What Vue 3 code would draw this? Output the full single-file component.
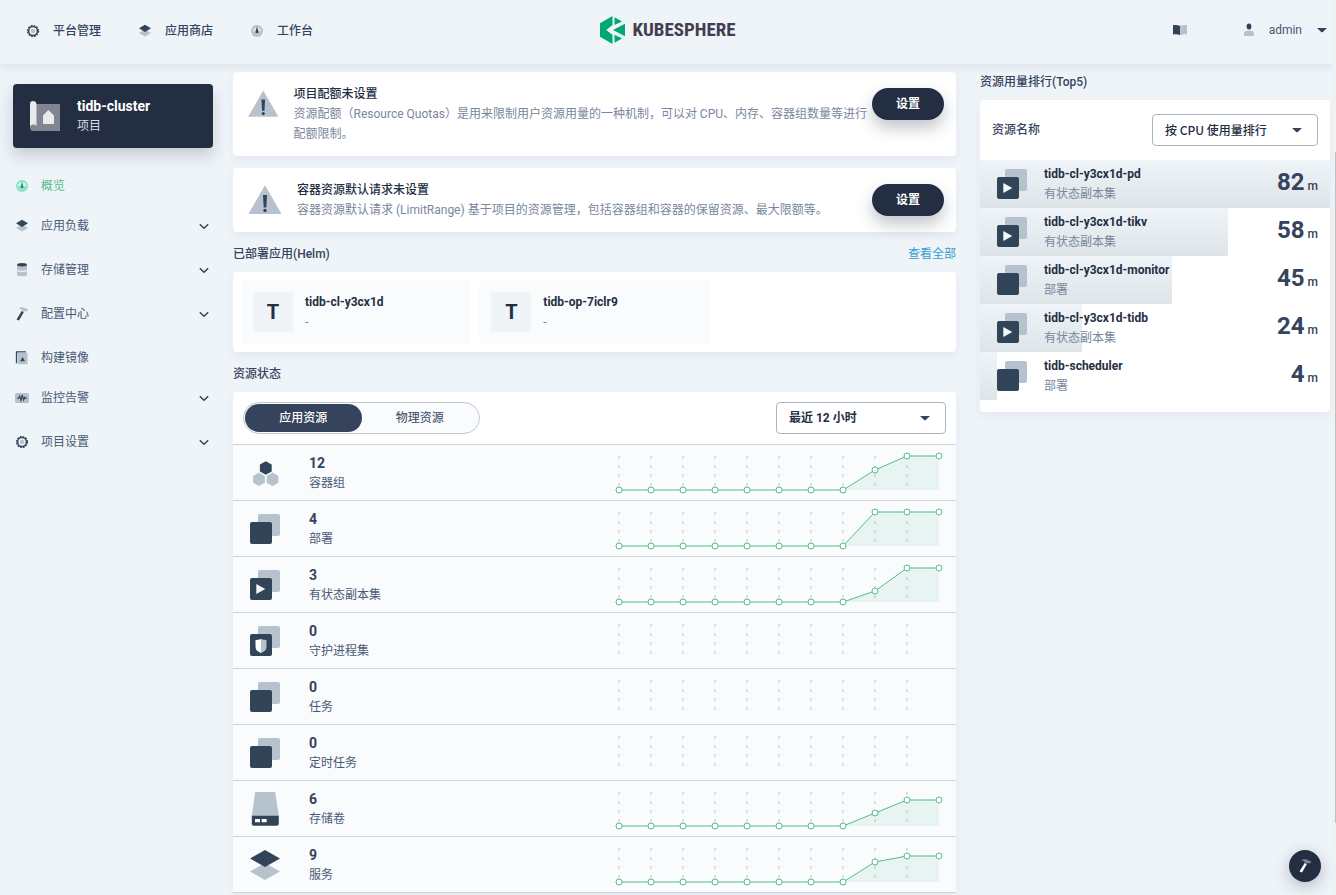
<script setup>
import { ref } from 'vue'

const navItems = [
  { icon: 'gear', label: '平台管理' },
  { icon: 'layers', label: '应用商店' },
  { icon: 'gauge', label: '工作台' },
]

const menuItems = [
  { icon: 'gauge', label: '概览', active: true },
  { icon: 'layers', label: '应用负载', expandable: true },
  { icon: 'database', label: '存储管理', expandable: true },
  { icon: 'hammer', label: '配置中心', expandable: true },
  { icon: 'image', label: '构建镜像' },
  { icon: 'monitor', label: '监控告警', expandable: true },
  { icon: 'gear', label: '项目设置', expandable: true },
]

const notices = [
  {
    title: '项目配额未设置',
    text: '资源配额（Resource Quotas）是用来限制用户资源用量的一种机制，可以对 CPU、内存、容器组数量等进行配额限制。',
  },
  {
    title: '容器资源默认请求未设置',
    text: '容器资源默认请求 (LimitRange) 基于项目的资源管理，包括容器组和容器的保留资源、最大限额等。',
  },
]

const apps = ['tidb-cl-y3cx1d', 'tidb-op-7iclr9']

const idle = [0, 0, 0, 0, 0, 0, 0, 0]
const resources = [
  { icon: 'pod', count: 12, label: '容器组', series: [...idle, 20, 34, 34] },
  { icon: 'deploy', count: 4, label: '部署', series: [...idle, 34, 34, 34] },
  { icon: 'stateful', count: 3, label: '有状态副本集', series: [...idle, 11, 34, 34] },
  { icon: 'daemon', count: 0, label: '守护进程集', series: [] },
  { icon: 'deploy', count: 0, label: '任务', series: [] },
  { icon: 'deploy', count: 0, label: '定时任务', series: [] },
  { icon: 'volume', count: 6, label: '存储卷', series: [...idle, 13, 26, 26] },
  { icon: 'service', count: 9, label: '服务', series: [...idle, 20, 26, 26] },
]

const ranking = [
  { icon: 'stateful', name: 'tidb-cl-y3cx1d-pd', kind: '有状态副本集', value: 82 },
  { icon: 'stateful', name: 'tidb-cl-y3cx1d-tikv', kind: '有状态副本集', value: 58 },
  { icon: 'deploy', name: 'tidb-cl-y3cx1d-monitor', kind: '部署', value: 45 },
  { icon: 'stateful', name: 'tidb-cl-y3cx1d-tidb', kind: '有状态副本集', value: 24 },
  { icon: 'deploy', name: 'tidb-scheduler', kind: '部署', value: 4 },
]

const tab = ref('app')
const range = ref('12h')
const metric = ref('cpu')

const px = (i) => 4 + i * 32
const py = (v) => 38 - v
const linePoints = (s) => s.map((v, i) => `${px(i)},${py(v)}`).join(' ')
const areaPoints = (s) => `${px(0)},38 ${linePoints(s)} ${px(s.length - 1)},38`
</script>

<template>
  <div class="page">
    <svg class="defs" aria-hidden="true">
      <symbol id="gear" viewBox="0 0 16 16">
        <circle cx="8" cy="8" r="4.400" fill="none" stroke="#324558" stroke-width="1.500" />
        <circle cx="8" cy="8" r="5.500" fill="none" stroke="#324558" stroke-width="1.300" stroke-dasharray="1.700 1.180" />
        <circle cx="8" cy="8" r="2.300" fill="#b6c2cd" />
      </symbol>
      <symbol id="layers" viewBox="0 0 16 16">
        <path d="M8 6.400 14 9.900 8 13.600 2 9.900z" fill="#b6c2cd" />
        <path d="M8 1.800 14 5.300 8 9.100 2 5.300z" fill="#324558" />
      </symbol>
      <symbol id="gauge" viewBox="0 0 16 16">
        <circle cx="8" cy="8" r="6" class="g-base" />
        <path d="M3.600 8.300a4.400 4.400 0 0 1 8.800 0z" class="g-face" />
        <path d="M8 3.600 9.300 8.200a1.400 1.400 0 1 1-2.600 0z" class="g-needle" />
      </symbol>
      <symbol id="database" viewBox="0 0 16 16">
        <path d="M3 3.200v4c0 1.100 2.200 1.600 5 1.600s5-.5 5-1.600v-4z" fill="#b6c2cd" />
        <path d="M3 9v3.700c0 1.100 2.200 1.600 5 1.600s5-.5 5-1.600V9c-.8.8-2.700 1.100-5 1.100S3.800 9.800 3 9z" fill="#b6c2cd" />
        <ellipse cx="8" cy="2.800" rx="5" ry="1.700" fill="#324558" />
      </symbol>
      <symbol id="hammer" viewBox="0 0 16 16">
        <path d="M4.200 2.600C6 1.100 9 .8 11 2.100l.8.700 2.300.300-.7 2.500-2-.6-1.200.5-2.500-1.200c-.5-1.100-1.500-1.700-3.500-1.700z" class="h-head" />
        <path d="M7.700 4.900 9.900 6 5 14.600 2.500 13.400z" class="h-handle" />
      </symbol>
      <symbol id="image" viewBox="0 0 16 16">
        <path d="M2.500 13.200V1.800H12" fill="none" stroke="#324558" stroke-width="1.300" />
        <rect x="3.800" y="2.800" width="9.800" height="11.400" rx=".8" fill="#b6c2cd" />
        <path d="M8.600 7 11 11.300H6.200z" fill="#324558" />
      </symbol>
      <symbol id="monitor" viewBox="0 0 16 16">
        <rect x="1" y="3" width="14" height="10" rx="1.500" fill="#b6c2cd" />
        <path d="M3 8.300h1.600l1.100-2.300 1.300 4.500L8.300 5l1.300 5 1.200-2.800.7 1.100H13" fill="none" stroke="#324558" stroke-width="1.100" />
      </symbol>
      <symbol id="book" viewBox="0 0 16 16">
        <path d="M1 3.200c2.400-.5 4.700-.3 7 .6v9.300c-2.300-.9-4.600-1.100-7-.6z" fill="#324558" />
        <path d="M15 3.200c-2.400-.5-4.700-.3-7 .6v9.300c2.300-.9 4.600-1.100 7-.6z" fill="#b6c2cd" />
      </symbol>
      <symbol id="user" viewBox="0 0 16 16">
        <path d="M3 14v-2.500C3 9.300 4.700 8.600 8 8.600s5 .7 5 2.900V14z" fill="#b6c2cd" />
        <ellipse cx="8" cy="4.600" rx="2.400" ry="3" fill="#324558" />
      </symbol>
      <symbol id="caret" viewBox="0 0 16 16">
        <path d="M3 6h10l-4.200 4q-.8.600-1.600 0z" fill="#324558" />
      </symbol>
      <symbol id="chevron" viewBox="0 0 16 16">
        <path d="M3.800 6.300 8 10.300l4.200-4" fill="none" stroke="#324558" stroke-width="1.500" />
      </symbol>
      <symbol id="project" viewBox="0 0 30 30">
        <path d="M6 3h24v27H3z" fill="#7f8591" />
        <path d="M0 3q0-3 3-3t3.500 3v22.500Q3 22.500 0 27z" fill="#e9eaec" />
        <circle cx="3.400" cy="26.700" r="3.300" fill="#7f8591" />
        <path d="M18.300 9 24 14.500V23H13v-8.500z" fill="#e9eaec" />
      </symbol>
      <symbol id="warning" viewBox="0 0 40 40">
        <path d="M20 5.300 36.600 34H3.400z" fill="#b6c2cd" />
        <path d="M18 15h4l-.7 12.500h-2.600z" fill="#324558" />
        <circle cx="20" cy="30.500" r="1.700" fill="#324558" />
      </symbol>
      <symbol id="deploy" viewBox="0 0 40 40">
        <rect x="13" y="5" width="22" height="22" rx="2" fill="#b6c2cd" />
        <rect x="5" y="13" width="22" height="22" rx="2" fill="#324558" />
      </symbol>
      <symbol id="stateful" viewBox="0 0 40 40">
        <rect x="13" y="5" width="22" height="22" rx="2" fill="#b6c2cd" />
        <rect x="5" y="13" width="22" height="22" rx="2" fill="#324558" />
        <path d="M11.300 19v10l9-5z" fill="#f4f7fa" />
      </symbol>
      <symbol id="daemon" viewBox="0 0 40 40">
        <rect x="13" y="5" width="22" height="22" rx="2" fill="#b6c2cd" />
        <rect x="5" y="13" width="22" height="22" rx="2" fill="#324558" />
        <path d="M16 18q-2.500 1-5.500 1v6.500q0 4.500 5.500 6.500z" fill="#fff" />
        <path d="M16 18q2.500 1 5.500 1v6.500q0 4.500-5.500 6.500z" fill="#b6c2cd" />
      </symbol>
      <symbol id="pod" viewBox="0 0 40 40">
        <path d="M20.800 8.200 26.700 11.600v6.800l-5.900 3.400-5.900-3.400v-6.800z" fill="#324558" />
        <path d="M14 19.500 19.900 22.900v6.800L14 33.100 8.100 29.700v-6.800z" fill="#b6c2cd" />
        <path d="M27.500 19.500 33.400 22.900v6.800l-5.900 3.400-5.900-3.400v-6.800z" fill="#b6c2cd" />
      </symbol>
      <symbol id="volume" viewBox="0 0 40 40">
        <path d="M10.200 3h20l3.600 24H6.800z" fill="#b6c2cd" />
        <path d="M6.800 26.700h27v8q0 2-2 2h-23q-2 0-2-2z" fill="#324558" />
        <path d="M10 30h5v3.300h-5zM16.700 30h5v3.300h-5z" fill="#fff" />
      </symbol>
      <symbol id="service" viewBox="0 0 40 40">
        <path d="M20 18 35 26.500 20 35 5 26.500z" fill="#b6c2cd" />
        <path d="M20 5 35 13.500 20 22 5 13.500z" fill="#324558" />
      </symbol>
    </svg>

    <header class="header">
      <nav class="nav">
        <a v-for="n in navItems" :key="n.label" class="nav-item" href="#">
          <svg class="icon"><use :href="'#' + n.icon" /></svg>
          <span>{{ n.label }}</span>
        </a>
      </nav>
      <a class="logo" href="#">
        <svg class="logo-mark" viewBox="0 0 26 28">
          <path d="M12.500 0v9.400L6.500 14l6 4.600V28L0 20.800V7.200z" fill="#00a971" />
          <path d="M14.500 1.300 22 5.600 14.500 9z" fill="#00a971" />
          <path d="M25 7.800v12.400L13 14z" fill="#00a971" />
          <path d="M14.500 18.800 22 22.400l-7.500 4.300z" fill="#00a971" />
          <path d="M12 9.400 6.500 14l5.500 4.600z" fill="#eff4f9" />
        </svg>
        <span>KUBESPHERE</span>
      </a>
      <div class="tools">
        <button class="plain" type="button" aria-label="文档">
          <svg class="icon"><use href="#book" /></svg>
        </button>
        <button class="plain user" type="button">
          <svg class="icon"><use href="#user" /></svg>
          <span>admin</span>
          <svg class="icon"><use href="#caret" /></svg>
        </button>
      </div>
    </header>

    <div class="body">
      <div class="sidebar">
        <button class="project" type="button">
          <svg class="project-icon"><use href="#project" /></svg>
          <span class="project-text">
            <strong>tidb-cluster</strong>
            <span>项目</span>
          </span>
        </button>
        <nav class="menu">
          <a
            v-for="m in menuItems"
            :key="m.label"
            href="#"
            :class="['menu-item', { active: m.active, expandable: m.expandable }]"
          >
            <svg class="icon"><use :href="'#' + m.icon" /></svg>
            <span class="menu-label">{{ m.label }}</span>
            <svg v-if="m.expandable" class="icon"><use href="#chevron" /></svg>
          </a>
        </nav>
      </div>

      <main class="main">
        <section v-for="n in notices" :key="n.title" class="card notice">
          <svg class="notice-icon"><use href="#warning" /></svg>
          <div class="notice-text">
            <h3>{{ n.title }}</h3>
            <p>{{ n.text }}</p>
          </div>
          <button class="primary" type="button">设置</button>
        </section>

        <div class="heading">
          <h2>已部署应用(Helm)</h2>
          <a href="#">查看全部</a>
        </div>
        <section class="card apps">
          <article v-for="a in apps" :key="a" class="app">
            <span class="app-tile">T</span>
            <div>
              <h3>{{ a }}</h3>
              <p>-</p>
            </div>
          </article>
        </section>

        <div class="heading">
          <h2>资源状态</h2>
        </div>
        <section class="card status">
          <div class="status-head">
            <div class="toggle">
              <button type="button" :class="{ on: tab === 'app' }" :aria-pressed="tab === 'app'" @click="tab = 'app'">应用资源</button>
              <button type="button" :class="{ on: tab === 'physical' }" :aria-pressed="tab === 'physical'" @click="tab = 'physical'">物理资源</button>
            </div>
            <div class="select range">
              <select v-model="range" aria-label="时间范围">
                <option value="12h">最近 12 小时</option>
              </select>
              <svg class="icon"><use href="#caret" /></svg>
            </div>
          </div>
          <div v-for="r in resources" :key="r.label" class="resource">
            <svg class="big-icon"><use :href="'#' + r.icon" /></svg>
            <div class="resource-text">
              <strong>{{ r.count }}</strong>
              <span>{{ r.label }}</span>
            </div>
            <svg class="chart" viewBox="0 0 328 44">
              <line v-for="i in 10" :key="i" :x1="px(i - 1)" :x2="px(i - 1)" y1="4" y2="38" class="grid" />
              <template v-if="r.series.length">
                <polygon :points="areaPoints(r.series)" class="area" />
                <polyline :points="linePoints(r.series)" class="line" />
                <circle v-for="(v, i) in r.series" :key="i" :cx="px(i)" :cy="py(v)" r="3" class="dot" />
              </template>
            </svg>
          </div>
        </section>
      </main>

      <aside class="aside">
        <h2 class="aside-title">资源用量排行(Top5)</h2>
        <section class="card rank">
          <div class="rank-head">
            <label for="metric">资源名称</label>
            <div class="select metric">
              <select id="metric" v-model="metric">
                <option value="cpu">按 CPU 使用量排行</option>
              </select>
              <svg class="icon"><use href="#caret" /></svg>
            </div>
          </div>
          <div v-for="r in ranking" :key="r.name" class="rank-row">
            <span class="rank-bar" :style="{ width: (r.value / 82) * 100 + '%' }"></span>
            <svg class="big-icon"><use :href="'#' + r.icon" /></svg>
            <div class="rank-text">
              <h3>{{ r.name }}</h3>
              <p>{{ r.kind }}</p>
            </div>
            <div class="rank-value"><strong>{{ r.value }}</strong> m</div>
          </div>
        </section>
      </aside>
    </div>

    <div class="scroll-track"><span class="scroll-thumb"></span></div>
    <button class="fab" type="button" aria-label="工具箱">
      <svg class="icon"><use href="#hammer" /></svg>
    </button>
  </div>
</template>

<style>
body {
  background: #eff4f9;
}
</style>

<style scoped>
.page {
  position: relative;
  display: flex;
  flex-direction: column;
  height: 100vh;
  overflow: hidden;
  padding-right: 3px;
  box-sizing: border-box;
  background: #eff4f9;
  color: #242e42;
  font: 400 12px/20px Roboto, "Noto Sans CJK SC", sans-serif;
}
.page * {
  box-sizing: border-box;
}
.defs {
  position: absolute;
  width: 0;
  height: 0;
}
h2, h3, p {
  margin: 0;
  font-size: 12px;
  line-height: 20px;
}
h2, h3 {
  font-weight: 500;
}
a {
  color: inherit;
  text-decoration: none;
}
button, select {
  font: inherit;
  color: inherit;
  border: 0;
  padding: 0;
  margin: 0;
  background: none;
  cursor: pointer;
}
.icon {
  width: 16px;
  height: 16px;
  flex: none;
  --g-base: #b6c2cd;
  --g-face: #dbe2ea;
  --g-needle: #324558;
}
.g-base { fill: var(--g-base); }
.g-face { fill: var(--g-face); }
.g-needle { fill: var(--g-needle); }
.h-head { fill: var(--h-head, #b6c2cd); }
.h-handle { fill: var(--h-handle, #324558); }

.header {
  position: relative;
  z-index: 2;
  flex: none;
  display: grid;
  grid-template-columns: 1fr auto 1fr;
  align-items: center;
  height: 64px;
  padding: 0 3px 4px 6px;
  background: #eff4f9;
  box-shadow: 0 4px 8px rgba(36, 46, 66, 0.08);
}
.nav {
  display: flex;
  gap: 36px;
  padding: 2px 0 0 19px;
}
.nav-item {
  display: flex;
  align-items: center;
  gap: 12px;
  color: #36435c;
  font-weight: 500;
}
.logo {
  display: flex;
  align-items: center;
  gap: 6px;
  color: #443d50;
  font: 700 19px/28px "Liberation Sans Narrow", "Roboto Condensed", "DejaVu Sans Condensed", sans-serif;
}
.logo-mark {
  width: 26px;
  height: 28px;
}
.tools {
  display: flex;
  justify-content: flex-end;
  align-items: center;
  gap: 53px;
}
.plain {
  display: flex;
  align-items: center;
  gap: 12px;
  color: #4a5974;
}

.body {
  flex: 1;
  min-height: 0;
  display: grid;
  grid-template-columns: 209px minmax(0, 1fr) 350px;
  gap: 24px;
  padding-right: 3px;
  align-items: start;
}
.sidebar {
  padding: 20px 0 0 13px;
}
.project {
  display: flex;
  align-items: center;
  gap: 17px;
  width: 200px;
  height: 64px;
  padding: 0 17px;
  border-radius: 4px;
  background: #242e42;
  color: #d8dce5;
  text-align: left;
  box-shadow: 0 8px 16px rgba(36, 46, 66, 0.2);
}
.project-icon {
  width: 30px;
  height: 30px;
}
.project-text {
  display: flex;
  flex-direction: column;
}
.project-text strong {
  color: #fff;
  font-size: 14px;
  font-weight: 700;
}
.menu {
  display: flex;
  flex-direction: column;
  width: 200px;
  padding-top: 18px;
}
.menu-item {
  display: flex;
  align-items: center;
  height: 40px;
  padding: 0 1px;
  gap: 11px;
  color: #4a5974;
}
.menu-item.expandable {
  margin-bottom: 4px;
}
.menu-item.active {
  color: #55bc8a;
}
.menu-item.active .icon {
  --g-base: #90e0c5;
  --g-face: #d9f5ec;
  --g-needle: #00a971;
}
.menu-label {
  flex: 1;
}

.main, .aside {
  padding-top: 8px;
}
.card {
  border-radius: 4px;
  background: #fff;
  box-shadow: 0 4px 8px rgba(36, 46, 66, 0.06);
}
.notice {
  display: flex;
  align-items: flex-start;
  padding: 12px;
  margin-bottom: 12px;
}
.notice-icon {
  width: 40px;
  height: 40px;
  margin-right: 12px;
}
.notice-text {
  flex: 0 1 auto;
}
.notice-text p {
  color: #79879c;
}
.primary {
  flex: none;
  width: 72px;
  height: 32px;
  margin: 4px 0 0 auto;
  border-radius: 16px;
  background: #242e42;
  color: #fff;
  font-weight: 700;
  box-shadow: 0 8px 16px rgba(36, 46, 66, 0.28);
}
.heading {
  display: flex;
  justify-content: space-between;
  margin: 12px 0 8px;
}
.heading h2, .aside-title {
  color: #36435c;
}
.heading a {
  color: #329dce;
}
.apps {
  display: grid;
  grid-template-columns: repeat(3, 1fr);
  gap: 8px;
  padding: 8px;
}
.app {
  display: flex;
  gap: 12px;
  padding: 12px;
  border-radius: 4px;
  background: #f9fbfd;
}
.app h3 {
  font-weight: 700;
}
.app p {
  color: #79879c;
}
.app-tile {
  width: 40px;
  height: 40px;
  background: #eff4f9;
  font-size: 20px;
  font-weight: 700;
  line-height: 40px;
  text-align: center;
}

.status-head {
  display: flex;
  justify-content: space-between;
  padding: 10px;
  border-bottom: 1px solid #ccd3db;
}
.toggle {
  display: flex;
  width: 237px;
  height: 32px;
  padding: 1px;
  border: 1px solid #c1c9d1;
  border-radius: 16px;
  background: #f9fbfd;
}
.toggle button {
  flex: 1;
  border-radius: 14px;
  color: #36435c;
}
.toggle button.on {
  background: #36435c;
  color: #fff;
  font-weight: 500;
}
.select {
  display: grid;
  align-items: center;
}
.select > * {
  grid-area: 1 / 1;
}
.select select {
  width: 100%;
  height: 32px;
  padding: 0 40px 0 12px;
  border: 1px solid #abb4be;
  border-radius: 4px;
  background: #fff;
  font-weight: 500;
  appearance: none;
}
.select .icon {
  justify-self: end;
  margin-right: 13px;
  pointer-events: none;
}
.range {
  width: 170px;
}
.range select {
  font-weight: 700;
}
.metric {
  width: 166px;
}
.metric select {
  font-family: "Noto Sans CJK SC", sans-serif;
}
.resource {
  display: flex;
  align-items: center;
  height: 56px;
  padding: 0 13px 0 12px;
  border-bottom: 1px solid #ccd3db;
  background: #f9fbfd;
}
.big-icon {
  flex: none;
  width: 40px;
  height: 40px;
}
.resource-text {
  display: flex;
  flex-direction: column;
  flex: 1;
  margin-left: 24px;
  color: #4a5974;
}
.resource-text strong {
  color: #36435c;
  font-size: 14px;
}
.chart {
  width: 328px;
  height: 44px;
  margin-top: 2px;
}
.grid {
  stroke: #dcdfe2;
  stroke-width: 2;
  stroke-dasharray: 3 6;
}
.area {
  fill: #55bc8a;
  fill-opacity: 0.1;
}
.line {
  fill: none;
  stroke: #55bc8a;
}
.dot {
  fill: #fff;
  stroke: #55bc8a;
}

.aside-title {
  margin-bottom: 8px;
}
.rank {
  padding-bottom: 12px;
}
.rank-head {
  display: flex;
  align-items: center;
  justify-content: space-between;
  height: 60px;
  padding: 0 12px;
  color: #36435c;
  font-weight: 500;
}
.rank-head select {
  color: #242e42;
}
.rank-row {
  position: relative;
  display: flex;
  align-items: center;
  height: 48px;
  padding: 0 12px;
}
.rank-bar {
  position: absolute;
  inset: 0 auto 0 0;
  background: linear-gradient(#eff4f9, #dfe4e8);
}
.rank-row .big-icon, .rank-text, .rank-value {
  position: relative;
}
.rank-text {
  flex: 1;
  margin-left: 12px;
}
.rank-text h3 {
  font-weight: 700;
}
.rank-text p {
  color: #79879c;
}
.rank-value {
  color: #36435c;
  font-weight: 500;
}
.rank-value strong {
  font-size: 24px;
  font-weight: 700;
}

.scroll-track {
  position: absolute;
  z-index: 3;
  top: 0;
  right: 0;
  bottom: 0;
  width: 3px;
  background: #f1f1f1;
}
.scroll-thumb {
  position: absolute;
  right: 0;
  top: 17%;
  bottom: 8%;
  width: 1px;
  background: #c1c1c1;
}
.fab {
  position: absolute;
  z-index: 3;
  right: 15px;
  bottom: 13px;
  display: flex;
  align-items: center;
  justify-content: center;
  width: 32px;
  height: 32px;
  border-radius: 50%;
  background: #242e42;
  box-shadow: 0 4px 16px rgba(36, 46, 66, 0.3);
}
.fab .icon {
  --h-head: #7f8591;
  --h-handle: #fff;
}
</style>
